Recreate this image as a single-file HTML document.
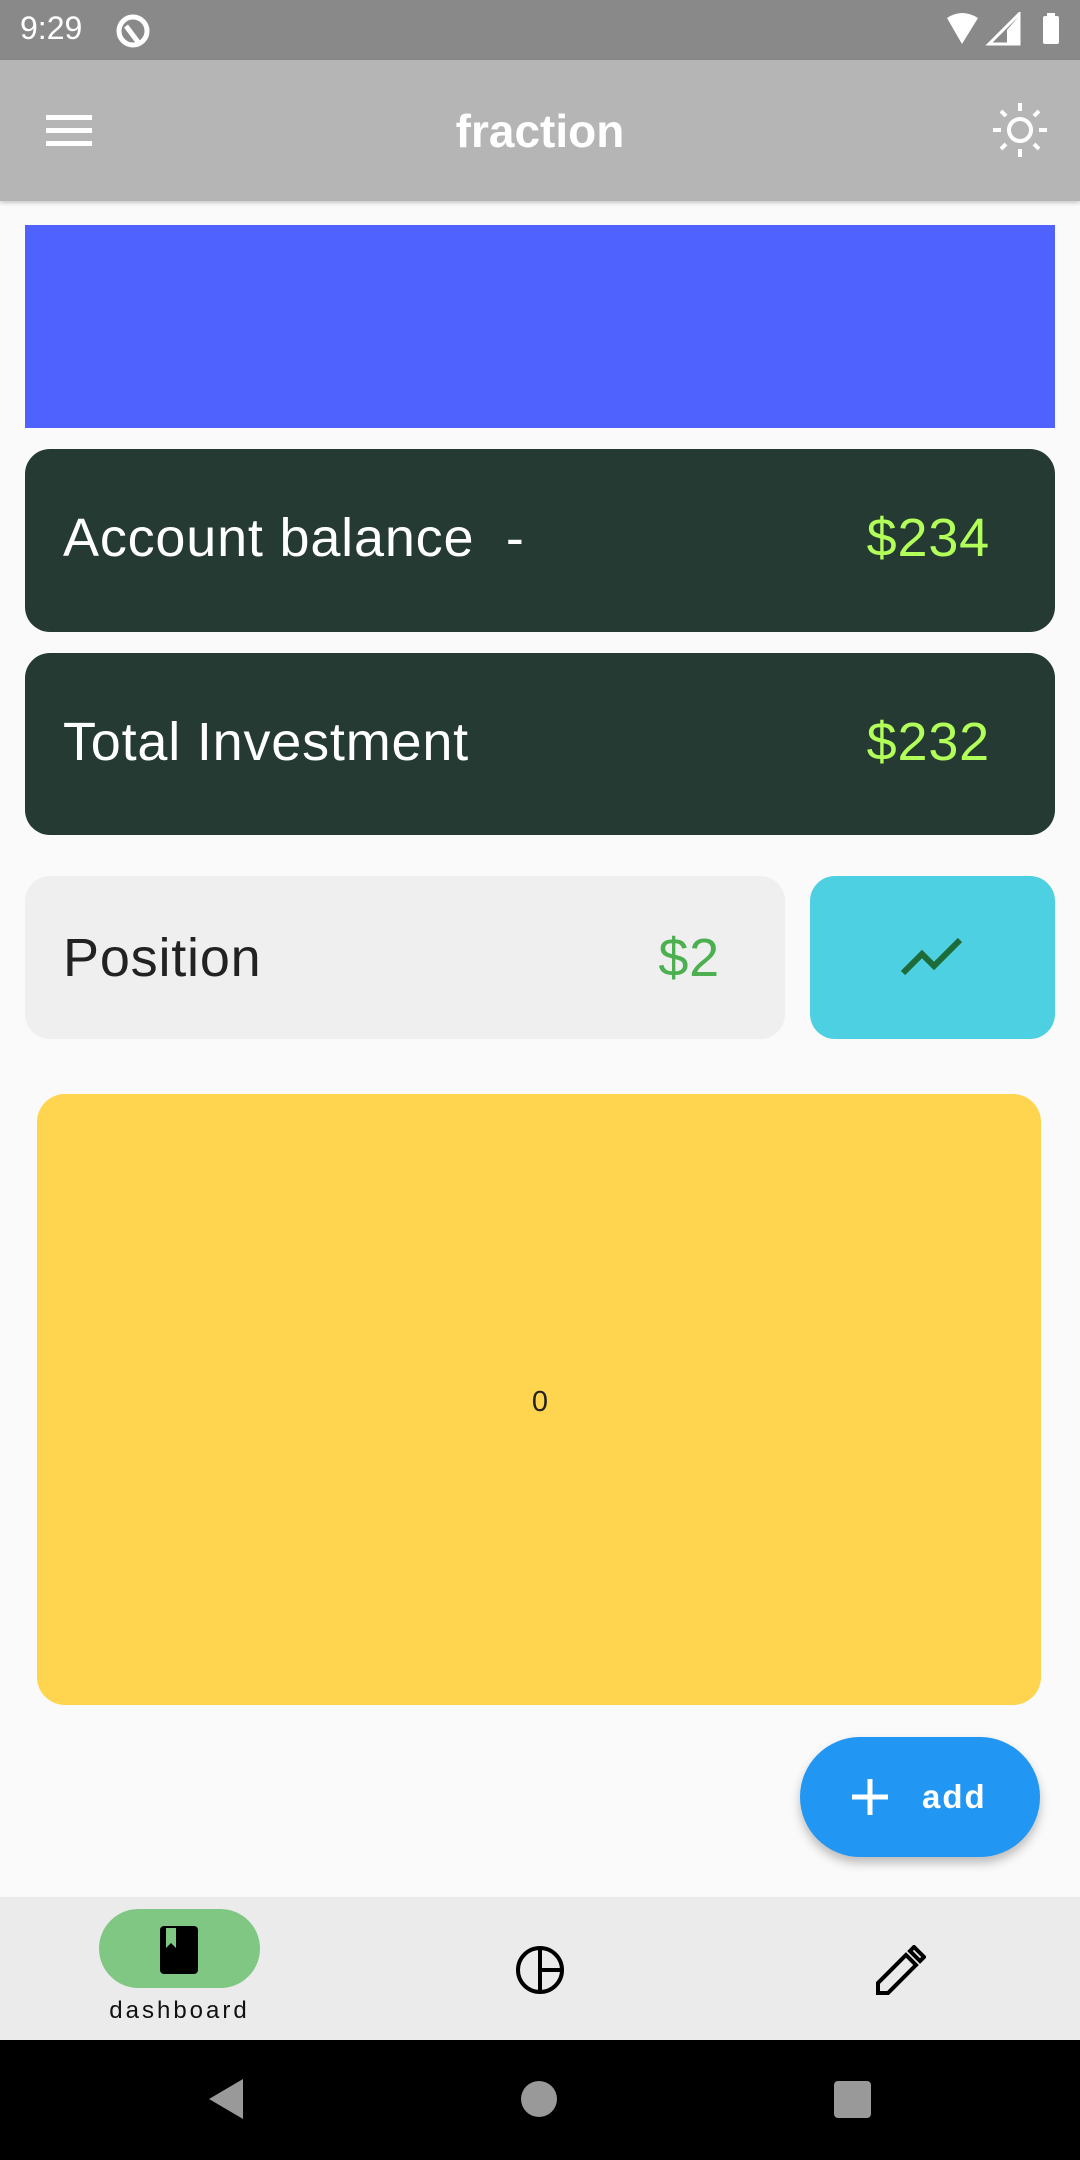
<!DOCTYPE html>
<html><head><meta charset="utf-8"><style>
*{margin:0;padding:0;box-sizing:border-box}
body{width:1080px;height:2160px;background:#fafafa;font-family:"Liberation Sans",sans-serif;position:relative;overflow:hidden}
.a{position:absolute}
.big{font-size:54px;letter-spacing:0.8px}
</style></head><body>
<div class="a" style="left:0;top:0;width:1080px;height:60px;background:#898989"></div>
<div class="a" style="left:20px;top:10px;color:#fff;font-size:32px">9:29</div>
<svg class="a" style="left:114px;top:12px" width="38" height="38" viewBox="0 0 38 38"><circle cx="19" cy="19" r="14" fill="none" stroke="#fff" stroke-width="5"/><path d="M12 14 L24 30" stroke="#fff" stroke-width="5"/></svg>
<svg class="a" style="left:945px;top:12px" width="120" height="36" viewBox="0 0 120 36"><path d="M2 6 Q17 -4 33 6 L17 32 Z" fill="#fff"/><path d="M74 2 L74 32 L44 32 Z" fill="none" stroke="#fff" stroke-width="3"/><path d="M62 18 L74 4 L74 32 L62 32Z" fill="#fff"/><rect x="98" y="4" width="16" height="28" rx="2" fill="#fff"/><rect x="102" y="1" width="8" height="4" fill="#fff"/></svg>
<div class="a" style="left:0;top:60px;width:1080px;height:141px;background:#b5b5b5;box-shadow:0 2px 4px rgba(0,0,0,.2)"></div>
<svg class="a" style="left:46px;top:113px" width="48" height="36" viewBox="0 0 48 36"><rect x="0" y="2" width="46" height="5" fill="#fff"/><rect x="0" y="15" width="46" height="5" fill="#fff"/><rect x="0" y="28" width="46" height="5" fill="#fff"/></svg>
<div class="a" style="left:0;width:1080px;top:104px;text-align:center;color:#fff;font-size:46px;font-weight:bold">fraction</div>
<svg class="a" style="left:990px;top:100px" width="60" height="60" viewBox="0 0 60 60"><circle cx="30" cy="30" r="11" fill="none" stroke="#fff" stroke-width="4"/><g stroke="#fff" stroke-width="4"><path d="M30 3v8M30 49v8M3 30h8M49 30h8M11 11l5 5M44 44l5 5M11 49l5-5M44 16l5-5"/></g></svg>
<div class="a" style="left:25px;top:225px;width:1030px;height:203px;background:#4f62fe"></div>
<div class="a" style="left:25px;top:449px;width:1030px;height:183px;background:#243a33;border-radius:25px"></div>
<div class="a big" style="left:63px;top:507px;color:#fff">Account balance&nbsp; -</div>
<div class="a big" style="left:780px;width:210px;text-align:right;top:507px;color:#b2ff59">$234</div>
<div class="a" style="left:25px;top:653px;width:1030px;height:182px;background:#243a33;border-radius:25px"></div>
<div class="a big" style="left:63px;top:711px;color:#fff">Total Investment</div>
<div class="a big" style="left:780px;width:210px;text-align:right;top:711px;color:#b2ff59">$232</div>
<div class="a" style="left:25px;top:876px;width:760px;height:163px;background:#efefef;border-radius:25px"></div>
<div class="a big" style="left:63px;top:927px;color:#222">Position</div>
<div class="a big" style="left:600px;width:120px;text-align:right;top:927px;color:#4caf50">$2</div>
<div class="a" style="left:810px;top:876px;width:245px;height:163px;background:#4dd0e1;border-radius:25px"></div>
<svg class="a" style="left:900px;top:933px" width="66" height="46" viewBox="0 0 66 46"><path d="M3 40 L22 21 L34 33 L60 7" fill="none" stroke="#1e6b3a" stroke-width="6"/></svg>
<div class="a" style="left:37px;top:1094px;width:1004px;height:611px;background:#ffd54f;border-radius:28px"></div>
<div class="a" style="left:0;width:1080px;text-align:center;top:1386px;color:#222;font-size:29px">0</div>
<div class="a" style="left:800px;top:1737px;width:240px;height:120px;background:#2196f3;border-radius:60px;box-shadow:0 6px 10px rgba(0,0,0,.25)"></div>
<svg class="a" style="left:850px;top:1777px" width="40" height="40" viewBox="0 0 40 40"><path d="M20 2v36M2 20h36" stroke="#fff" stroke-width="5"/></svg>
<div class="a" style="left:922px;top:1778px;color:#fff;font-size:33px;font-weight:bold;letter-spacing:2px">add</div>
<div class="a" style="left:0;top:1897px;width:1080px;height:143px;background:#ebebeb"></div>
<div class="a" style="left:99px;top:1909px;width:161px;height:79px;background:#81c784;border-radius:40px"></div>
<svg class="a" style="left:158px;top:1924px" width="44" height="52" viewBox="0 0 44 52"><rect x="2" y="2" width="38" height="48" rx="4" fill="#000"/><path d="M8 4 L8 24 L13 19 L18 24 L18 4Z" fill="#81c784"/></svg>
<div class="a" style="left:99px;width:161px;text-align:center;top:1997px;color:#111;font-size:24px;letter-spacing:3px">dashboard</div>
<svg class="a" style="left:514px;top:1944px" width="52" height="52" viewBox="0 0 52 52"><circle cx="26" cy="26" r="22" fill="none" stroke="#000" stroke-width="4"/><path d="M26 4v44M26 26h22" stroke="#000" stroke-width="4"/></svg>
<svg class="a" style="left:874px;top:1945px" width="52" height="52" viewBox="0 0 52 52"><path d="M4 48 L4 38 L32 10 L42 20 L14 48Z M36 6 L40 2 L50 12 L46 16Z" fill="none" stroke="#000" stroke-width="4"/></svg>
<div class="a" style="left:0;top:2040px;width:1080px;height:120px;background:#000"></div>
<svg class="a" style="left:205px;top:2077px" width="40" height="44" viewBox="0 0 40 44"><path d="M38 2 L38 42 L4 22Z" fill="#999"/></svg>
<div class="a" style="left:521px;top:2081px;width:36px;height:36px;border-radius:50%;background:#999"></div>
<div class="a" style="left:834px;top:2081px;width:37px;height:37px;border-radius:4px;background:#999"></div>
</body></html>
